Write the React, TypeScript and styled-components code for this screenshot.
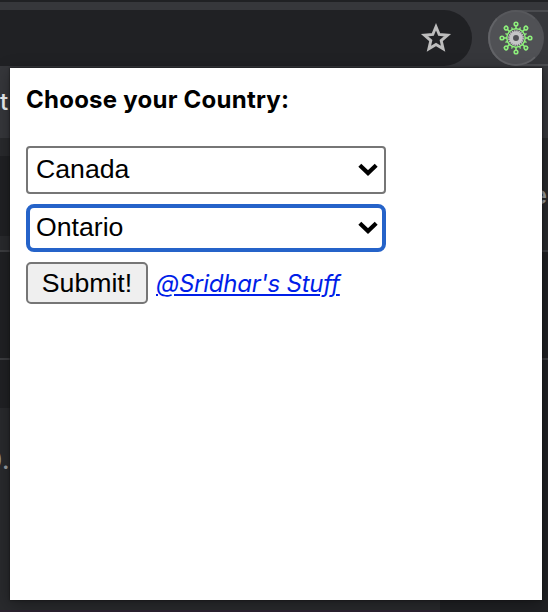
import React from 'react';
import styled, { createGlobalStyle } from 'styled-components';

const GlobalStyle = createGlobalStyle`
  * { box-sizing: border-box; }
  body { margin: 0; background: #202124; overflow: hidden; }
`;

const Browser = styled.div`
  position: relative;
  display: flex;
  flex-direction: column;
  width: 548px;
  height: 612px;
  overflow: hidden;
  background: #202124;
  border-top: 2px solid #202124;
  font-family: Inter, 'Liberation Sans', sans-serif;
`;

const Toolbar = styled.div`
  display: flex;
  flex: 0 0 64px;
  gap: 16px;
  padding-top: 8px;
  background: #36373b;
`;

const AddressBar = styled.div`
  display: flex;
  align-items: center;
  justify-content: flex-end;
  width: 472px;
  height: 56px;
  padding-right: 20px;
  border-radius: 0 28px 28px 0;
  background: #202124;
`;

const ExtensionTray = styled.div`
  flex: 1;
  height: 56px;
  border: 2px solid #4b4c50;
  border-right: 0;
  border-radius: 28px 0 0 28px;
`;

const ExtensionButton = styled.div`
  display: flex;
  align-items: center;
  justify-content: center;
  width: 56px;
  height: 56px;
  margin: -2px 0 0 -2px;
  border-radius: 50%;
  background: #505155;
  border: 2px solid;
  border-color: #57585c #505155 #626367 #626367;
`;

const Bookmarks = styled.div`
  flex: 0 0 72px;
  padding-top: 21px;
  background: #36373b;
  color: #f1f3f4;
  font-size: 24px;
  font-weight: 500;
  line-height: 30px;
`;

const Band = styled.div<{ $height: number; $tone: string }>`
  flex: 0 0 ${p => p.$height}px;
  background: ${p => p.$tone};
`;

const HeaderBand = styled.div`
  display: grid;
  grid-template-columns: 276px 1fr;
  grid-template-rows: 18px 80px 14px;
  flex: 0 0 112px;
  background: #292a2d;
`;

const SearchField = styled.div`
  grid-row: 2;
  background: #202124;
`;

const Heading = styled.div`
  grid-row: 2;
  grid-column: 2;
  justify-self: end;
  padding: 23px 1px 0 0;
  color: #9aa0a6;
  font-size: 25px;
  font-weight: 600;
  line-height: 32px;
`;

const Content = styled.div`
  display: grid;
  grid-template-columns: 440px 1fr;
  flex: 1;
`;

const Card = styled.div`
  padding-top: 36px;
  border-bottom: 2px solid #2c2230;
  background: #292a2d;
  color: #9aa0a6;
  font-size: 25px;
  font-weight: 500;
  line-height: 32px;
`;

const CardText = styled.span`
  display: block;
  margin-left: -14px;
  letter-spacing: 0.6px;
`;

const Popup = styled.main`
  position: absolute;
  left: 10px;
  top: 66px;
  width: 532px;
  height: 532px;
  padding: 16px;
  background: #fff;
  box-shadow: 0 0 2px #111, 0 4px 16px rgba(0, 0, 0, 0.35);
`;

const Title = styled.h1`
  margin: 0 0 30px;
  color: #000;
  font-size: 24px;
  font-weight: 700;
  line-height: 32px;
  letter-spacing: 0.24px;
  white-space: nowrap;
`;

const Select = styled.div<{ $focused?: boolean }>`
  display: flex;
  align-items: center;
  justify-content: space-between;
  width: 360px;
  height: 48px;
  margin-bottom: 10px;
  padding: ${p => (p.$focused ? '0 4px 2px 6px' : '0 6px 2px 8px')};
  border: ${p => (p.$focused ? '4px solid #2563c9' : '2px solid #767676')};
  border-radius: ${p => (p.$focused ? 8 : 4)}px;
  background: #fff;
  color: #000;
  font: 26.67px/30px 'Liberation Sans', sans-serif;
`;

const Actions = styled.div`
  display: flex;
  align-items: center;
  gap: 8px;
`;

const Submit = styled.button`
  width: 122px;
  height: 42px;
  padding: 0 0 1px;
  border: 2px solid #767676;
  border-radius: 5px;
  background: #efefef;
  color: #000;
  font: 26.67px/30px 'Liberation Sans', sans-serif;
`;

const Credit = styled.a`
  padding-top: 2px;
  color: #001ee8;
  font-size: 24px;
  font-style: italic;
  line-height: 30px;
  letter-spacing: -0.23px;
  white-space: nowrap;
  text-decoration: underline;
  text-decoration-thickness: 2px;
  text-underline-offset: 2px;
  text-decoration-skip-ink: auto;
`;

const Chevron = () => (
  <svg width="20" height="18" viewBox="0 -3 20 18">
    <path d="M1.8 2.2 10 10 18.2 2.2" fill="none" stroke="#000" strokeWidth="4.2" />
  </svg>
);

const Star = () => (
  <svg width="32" height="32" viewBox="0 0 32 32">
    <path
      d="M16 4.8 19.2 12.5 27.5 13.2 21.2 18.6 23.1 26.8 16 22.5 8.9 26.8 10.8 18.6 4.5 13.2 12.8 12.5Z"
      fill="none"
      stroke="#bdbdbd"
      strokeWidth="2.9"
    />
  </svg>
);

const spikes = [0, 45, 90, 135, 180, 225, 270, 315];

const Virus = () => (
  <svg width="34" height="34" viewBox="-17 -17 34 34" fill="none" stroke="#8ef07c">
    <circle r="9.2" strokeWidth="1.5" />
    {spikes.map(angle => (
      <g key={angle} transform={`rotate(${angle})`} strokeWidth="1.6">
        <path d="M0-9V-12" />
        <circle cy="-14" r="1.8" />
        <path d="M0-9V-11.5" transform="rotate(22.5)" strokeWidth="1.3" />
      </g>
    ))}
    <circle r="7" stroke="#c4c4c6" strokeWidth="1.7" strokeDasharray="1.5 0.7" />
    <circle r="4.8" stroke="#c4c4c6" strokeWidth="3.7" />
  </svg>
);

export default function App() {
  return (
    <>
      <GlobalStyle />
      <Browser>
        <Toolbar>
          <AddressBar><Star /></AddressBar>
          <ExtensionTray>
            <ExtensionButton><Virus /></ExtensionButton>
          </ExtensionTray>
        </Toolbar>
        <Bookmarks>t</Bookmarks>
        <HeaderBand>
          <SearchField />
          <Heading>e</Heading>
        </HeaderBand>
        <Band $height={2} $tone="#3c3d40" />
        <Band $height={106} $tone="#202124" />
        <Band $height={2} $tone="#3c3d40" />
        <Band $height={48} $tone="#202124" />
        <Content>
          <Card><CardText>0.</CardText></Card>
        </Content>
        <Popup>
          <Title>Choose your Country:</Title>
          <Select>Canada<Chevron /></Select>
          <Select $focused>Ontario<Chevron /></Select>
          <Actions>
            <Submit>Submit!</Submit>
            <Credit>@Sridhar's Stuff</Credit>
          </Actions>
        </Popup>
      </Browser>
    </>
  );
}
